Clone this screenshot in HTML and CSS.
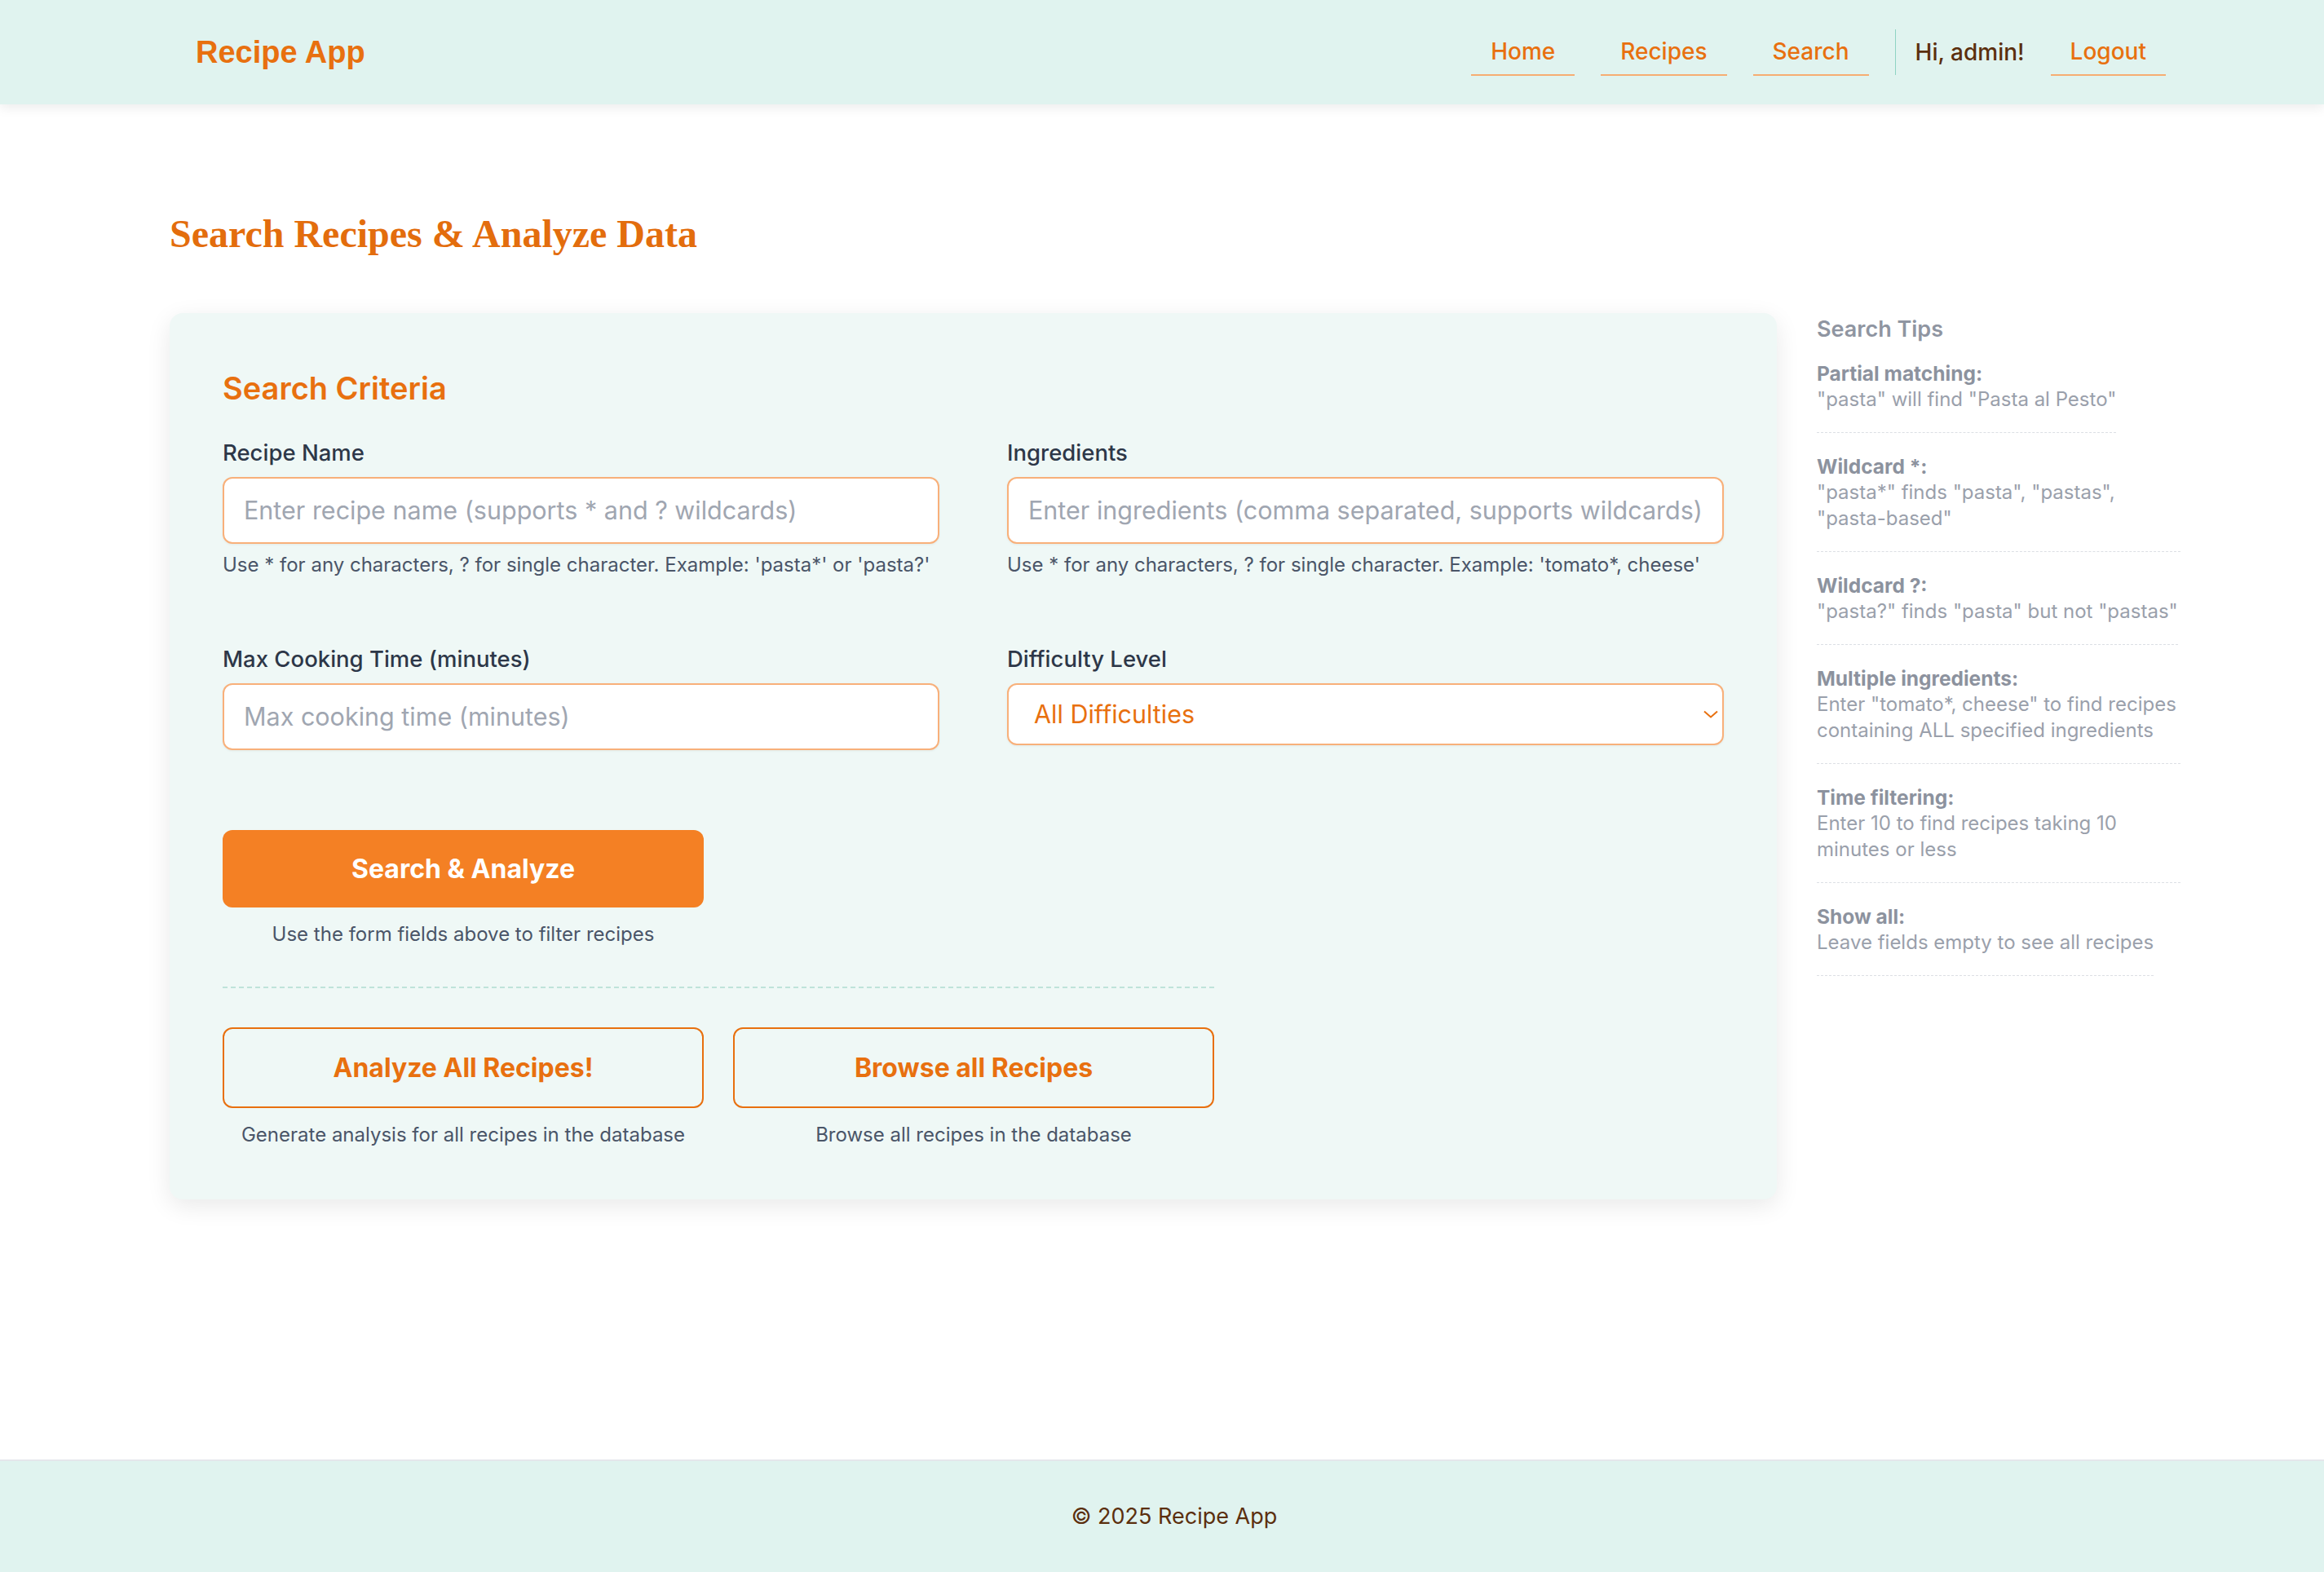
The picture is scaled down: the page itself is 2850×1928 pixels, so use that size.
FILE: index.html
```html
<!DOCTYPE html>
<html lang="en">
<head>
<meta charset="utf-8">
<title>Search Recipes - Recipe App</title>
<link rel="stylesheet" href="styles.css">
</head>
<body>
<header class="site-header">
  <a class="logo" href="#">Recipe App</a>
  <nav class="nav">
    <a class="nav-link" href="#">Home</a>
    <a class="nav-link" href="#">Recipes</a>
    <a class="nav-link" href="#">Search</a>
    <div class="user-area">
      <span class="greeting">Hi, admin!</span>
      <a class="nav-link" href="#">Logout</a>
    </div>
  </nav>
</header>

<main class="main">
  <h1 class="page-title">Search Recipes &amp; Analyze Data</h1>
  <div class="layout">
    <section class="card">
      <h2 class="card-title">Search Criteria</h2>
      <div class="form-grid">
        <div class="form-group">
          <label class="label">Recipe Name</label>
          <input class="input" type="text" placeholder="Enter recipe name (supports * and ? wildcards)">
          <p class="help">Use * for any characters, ? for single character. Example: 'pasta*' or 'pasta?'</p>
        </div>
        <div class="form-group">
          <label class="label">Ingredients</label>
          <input class="input" type="text" placeholder="Enter ingredients (comma separated, supports wildcards)">
          <p class="help">Use * for any characters, ? for single character. Example: 'tomato*, cheese'</p>
        </div>
        <div class="form-group">
          <label class="label">Max Cooking Time (minutes)</label>
          <input class="input" type="text" placeholder="Max cooking time (minutes)">
        </div>
        <div class="form-group">
          <label class="label">Difficulty Level</label>
          <div class="select-wrap">
            <select class="select">
              <option>All Difficulties</option>
            </select>
            <svg class="chevron" width="18" height="10" viewBox="0 0 18 10"><path d="M1 1.5 L9 8.5 L17 1.5" fill="none" stroke="#e8700f" stroke-width="2"/></svg>
          </div>
        </div>
      </div>

      <div class="actions">
        <div class="action-primary">
          <button class="btn btn-primary">Search &amp; Analyze</button>
          <p class="action-note">Use the form fields above to filter recipes</p>
        </div>
        <div class="actions-divider"></div>
        <div class="action-secondary">
          <div class="action-item">
            <button class="btn btn-outline">Analyze All Recipes!</button>
            <p class="action-note">Generate analysis for all recipes in the database</p>
          </div>
          <div class="action-item">
            <button class="btn btn-outline">Browse all Recipes</button>
            <p class="action-note">Browse all recipes in the database</p>
          </div>
        </div>
      </div>
    </section>

    <aside class="tips">
      <h3 class="tips-title">Search Tips</h3>
      <div class="tip">
        <div class="tip-title">Partial matching:</div>
        <div class="tip-text">"pasta" will find "Pasta al Pesto"</div>
      </div>
      <div class="tip">
        <div class="tip-title">Wildcard *:</div>
        <div class="tip-text">"pasta*" finds "pasta", "pastas", <span class="nowrap">"pasta-based"</span></div>
      </div>
      <div class="tip">
        <div class="tip-title">Wildcard ?:</div>
        <div class="tip-text">"pasta?" finds "pasta" but not "pastas"</div>
      </div>
      <div class="tip">
        <div class="tip-title">Multiple ingredients:</div>
        <div class="tip-text">Enter "tomato*, cheese" to find recipes containing ALL specified ingredients</div>
      </div>
      <div class="tip">
        <div class="tip-title">Time filtering:</div>
        <div class="tip-text">Enter 10 to find recipes taking 10 minutes or less</div>
      </div>
      <div class="tip">
        <div class="tip-title">Show all:</div>
        <div class="tip-text">Leave fields empty to see all recipes</div>
      </div>
    </aside>
  </div>
</main>

<footer class="site-footer">
  <p class="footer-text">© 2025 Recipe App</p>
</footer>
</body>
</html>
```

FILE: styles.css
```css
* {
  box-sizing: border-box;
}

html, body {
  margin: 0;
  padding: 0;
}

body {
  font-family: Inter, "Noto Sans", "Liberation Sans", sans-serif;
  background: #ffffff;
  color: #2d3748;
  min-height: 100vh;
  display: flex;
  flex-direction: column;
}

/* Header */
.site-header {
  height: 128px;
  background: #e0f3ef;
  box-shadow: 0 4px 14px rgba(0, 0, 0, 0.08);
  display: flex;
  align-items: center;
  justify-content: space-between;
  padding: 0 194px 0 240px;
  position: relative;
  z-index: 2;
}

.logo {
  font-family: "Liberation Sans", Arial, sans-serif;
  font-weight: 700;
  font-size: 38px;
  color: #e8700f;
  text-decoration: none;
}

.nav {
  display: flex;
  align-items: center;
  gap: 32px;
}

.nav-link {
  font-size: 28px;
  font-weight: 500;
  line-height: 42px;
  color: #e8700f;
  text-decoration: none;
  padding: 7px 24px;
  border-bottom: 2px solid #f6ad72;
}

.user-area {
  display: flex;
  align-items: center;
  gap: 32px;
  border-left: 1px solid #8fd3c3;
  padding-left: 24px;
  height: 56px;
}

.greeting {
  font-size: 28px;
  font-weight: 500;
  line-height: 42px;
  color: #5b2f0e;
}

/* Main */
.main {
  flex: 1;
  padding: 130px 0 80px 208px;
}

.page-title {
  margin: 0 0 68px;
  font-family: "Liberation Serif", "Times New Roman", serif;
  font-weight: 700;
  font-size: 48px;
  line-height: 1.2;
  color: #e36d0d;
}

.layout {
  display: flex;
  align-items: flex-start;
  gap: 49px;
}

.card {
  width: 1971px;
  flex: none;
  background: #eff8f6;
  border-radius: 16px;
  box-shadow: 0 8px 30px rgba(0, 0, 0, 0.09);
  padding: 64px 65px 62px;
}

.card-title {
  margin: 6px 0 37px;
  font-size: 38px;
  font-weight: 600;
  line-height: 1.2;
  color: #e8700f;
}

.form-grid {
  display: grid;
  grid-template-columns: 1fr 1fr;
  column-gap: 83px;
  row-gap: 79px;
}

.form-group {
  display: flex;
  flex-direction: column;
}

.label {
  font-size: 27.5px;
  font-weight: 500;
  line-height: 39px;
  color: #2d3748;
  margin-bottom: 10px;
}

.input,
.select {
  width: 100%;
  font-family: inherit;
  font-size: 30.5px;
  line-height: 38px;
  border: 2px solid #f8b07a;
  border-radius: 12px;
  background: #ffffff;
  outline: none;
  box-shadow: 0 1px 3px rgba(0, 0, 0, 0.06);
}

.input {
  padding: 20px 14px 20px 24px;
  color: #2d3748;
}

.input::placeholder {
  color: #a0a6b1;
}

.select-wrap {
  position: relative;
}

.select {
  -webkit-appearance: none;
  appearance: none;
  padding: 17px 40px 17px 31px;
  color: #e8700f;
}

.chevron {
  position: absolute;
  right: 7px;
  top: 33px;
  pointer-events: none;
}

.help {
  margin: 9px 0 0;
  font-size: 24px;
  line-height: 34px;
  color: #4a5568;
}

/* Actions */
.actions {
  width: 1216px;
  margin-top: 98px;
}

.action-primary {
  width: 590px;
  display: flex;
  flex-direction: column;
  align-items: stretch;
}

.btn {
  font-family: inherit;
  font-size: 32px;
  font-weight: 700;
  line-height: 39px;
  border-radius: 12px;
  cursor: pointer;
  width: 100%;
}

.btn-primary {
  background: #f48024;
  color: #ffffff;
  border: none;
  padding: 28px 20px;
}

.btn-outline {
  background: transparent;
  color: #e8700f;
  border: 2px solid #e8700f;
  padding: 28px 20px;
  line-height: 39px;
}

.action-note {
  margin: 16px 0 0;
  font-size: 24px;
  line-height: 34px;
  color: #4a5568;
  text-align: center;
}

.actions-divider {
  border-top: 2px dashed #bfe3da;
  margin: 47px 0 48px;
}

.action-secondary {
  display: grid;
  grid-template-columns: 590px 590px;
  column-gap: 36px;
}

.action-item {
  display: flex;
  flex-direction: column;
}

/* Tips */
.tips {
  width: 446px;
  flex: none;
  padding-top: 3px;
}

.tips-title {
  margin: 0 0 21px;
  font-size: 27px;
  font-weight: 600;
  line-height: 34px;
  color: #8f95a1;
}

.tip {
  width: fit-content;
  max-width: 100%;
  padding-bottom: 24px;
  border-bottom: 1px dashed #dcdfe4;
  margin-bottom: 25px;
  font-size: 24px;
  line-height: 32px;
}

.tip-title {
  font-size: 24.5px;
  font-weight: 700;
  color: #8c929e;
}

.tip-text {
  color: #9aa0ab;
}

.nowrap {
  white-space: nowrap;
}

/* Footer */
.site-footer {
  background: #e0f3ef;
  border-top: 2px solid #e4e7eb;
  padding: 47px 0 47px 30px;
  text-align: center;
}

.footer-text {
  margin: 0;
  font-size: 27px;
  line-height: 42px;
  color: #5b2f0e;
}
```
